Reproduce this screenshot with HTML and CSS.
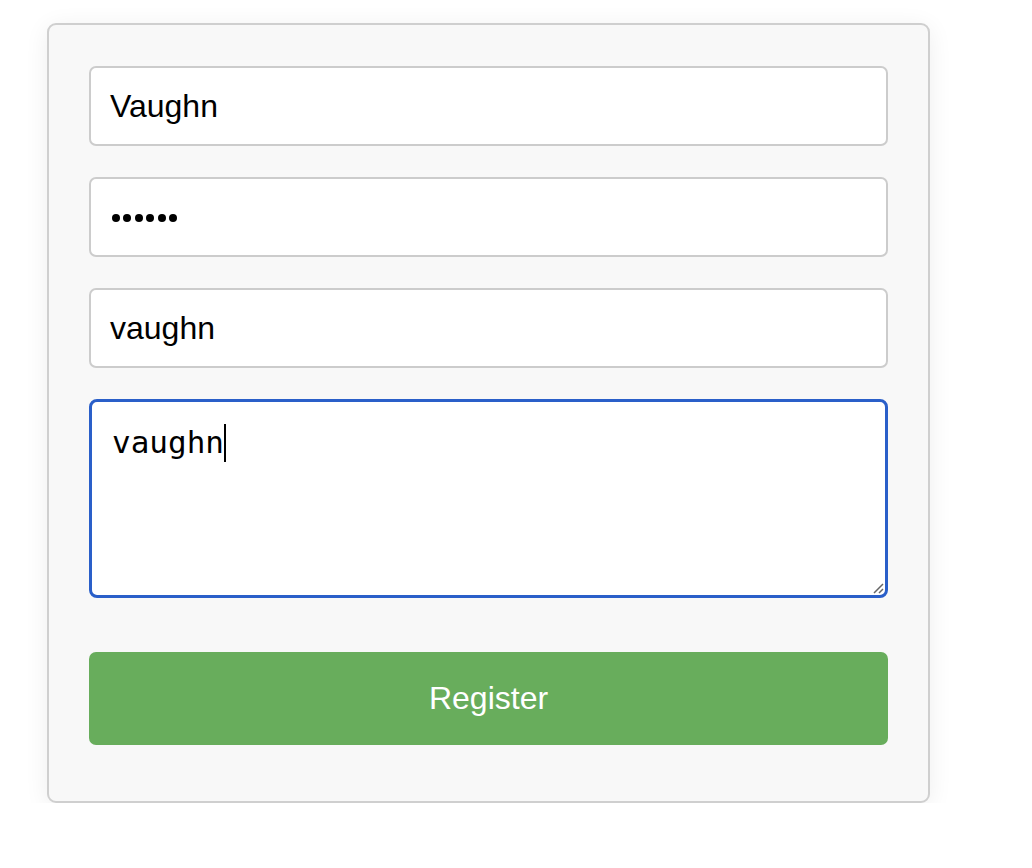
FILE: index.html
```html
<!DOCTYPE html>
<html>
<head>
<meta charset="utf-8">
<link rel="stylesheet" href="styles.css">
</head>
<body>
<div class="page">
  <form class="card">
    <div class="field">Vaughn</div>
    <div class="field password"><span class="dot"></span><span class="dot"></span><span class="dot"></span><span class="dot"></span><span class="dot"></span><span class="dot"></span></div>
    <div class="field">vaughn</div>
    <div class="area"><span class="typed">vaughn</span><span class="caret"></span>
      <svg class="grip" width="14" height="14" viewBox="0 0 14 14"><path d="M13 4 L4 13 M13 9 L9 13" stroke="#666" stroke-width="1.5" fill="none"/></svg>
    </div>
    <div class="button">Register</div>
  </form>
</div>
</body>
</html>
```

FILE: styles.css
```css
html, body {
  margin: 0;
  padding: 0;
  background: #ffffff;
}
.page {
  padding: 23px 0 0 47px;
}
.card {
  box-sizing: border-box;
  width: 883px;
  height: 780px;
  border: 2px solid #cfcfcf;
  border-radius: 9px;
  background: #f8f8f8;
  box-shadow: 0 4px 24px rgba(0, 0, 0, 0.07);
  padding: 41px 40px 0 40px;
  display: flex;
  flex-direction: column;
  font-family: "Liberation Sans", Arial, sans-serif;
}
.field {
  box-sizing: border-box;
  height: 80px;
  border: 2px solid #cccccc;
  border-radius: 7px;
  background: #ffffff;
  padding: 0 19px;
  display: flex;
  align-items: center;
  font-size: 32px;
  color: #000;
  margin-bottom: 31px;
}
.password {
  gap: 3.4px;
  padding-left: 21px;
  padding-top: 1px;
}
.dot {
  width: 8px;
  height: 8px;
  border-radius: 50%;
  background: #000;
}
.area {
  position: relative;
  box-sizing: border-box;
  height: 199px;
  border: 3px solid #2a5fc9;
  border-radius: 8px;
  background: #ffffff;
  padding: 19px 20px;
  font-family: "DejaVu Sans Mono", monospace;
  font-size: 31px;
  line-height: 42px;
  color: #000;
  display: flex;
  align-items: flex-start;
  margin-bottom: 54px;
}
.caret {
  display: inline-block;
  width: 2px;
  height: 38px;
  margin-top: 3px;
  background: #000;
}
.grip {
  position: absolute;
  right: 1px;
  bottom: 1px;
}
.button {
  box-sizing: border-box;
  height: 93px;
  border-radius: 7px;
  background: #68ad5c;
  color: #ffffff;
  font-size: 32px;
  display: flex;
  align-items: center;
  justify-content: center;
}
```
